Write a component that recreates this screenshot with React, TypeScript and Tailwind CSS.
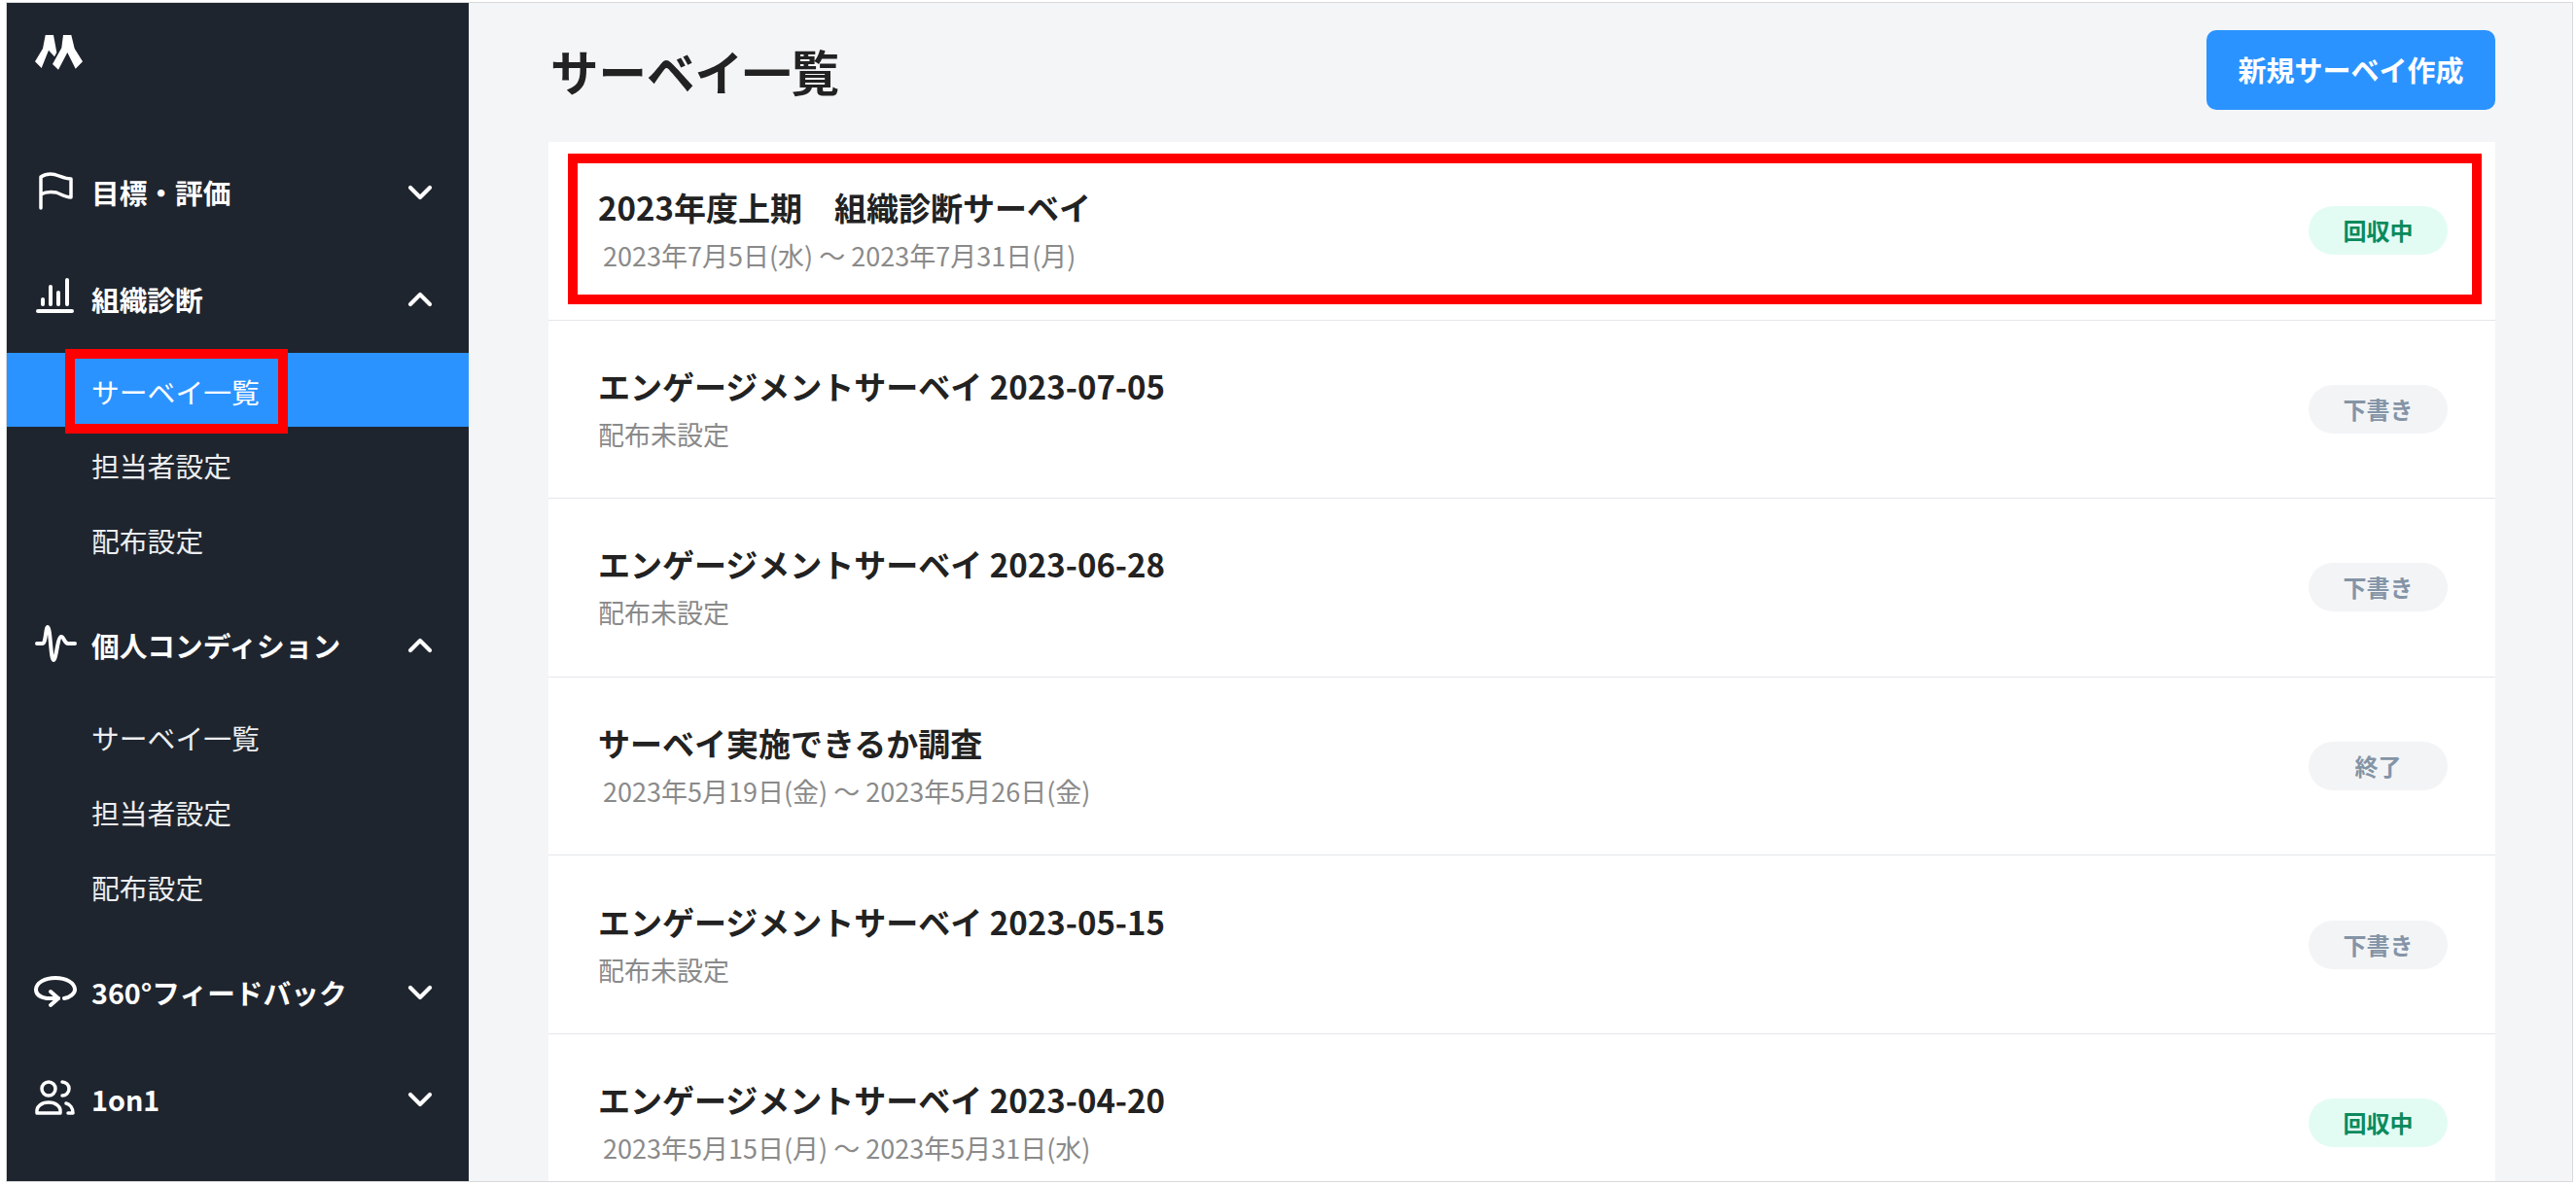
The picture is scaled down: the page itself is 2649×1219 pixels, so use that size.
import { ChevronDown, ChevronUp } from "lucide-react";
import type { ReactNode } from "react";

const iconProps = {
  className: "h-[50px] w-[60px]",
  fill: "none",
  stroke: "currentColor",
  strokeLinecap: "round",
  strokeLinejoin: "round",
} as const;

const FlagIcon = () => (
  <svg viewBox="0 3 60 50" strokeWidth="3.5" {...iconProps}>
    <path d="M12 44V12c3-2 6-3 10-3 7 0 13 5 21 5v19c-6 0-10-3-15-5-6-1-11-1-16 2" />
  </svg>
);

const BarsIcon = () => (
  <svg viewBox="0 3 60 50" strokeWidth="4" {...iconProps}>
    <path d="M9 40h35" />
    <path d="M14 33v-5M22 33V15M30 33V21M39 33V8" />
  </svg>
);

const PulseIcon = () => (
  <svg viewBox="0 -1 60 50" strokeWidth="4" {...iconProps}>
    <path d="M8 22h6c3 0 3-17 5-17 3 0 3 34 6 34 3 0 4-24 8-24 3 0 3 7 7 7h7" />
  </svg>
);

const LoopIcon = () => (
  <svg viewBox="0 0 60 50" strokeWidth="4" {...iconProps}>
    <path d="M36 31c6-1 11-5 11-9 0-7-9-12-20-12S7 15 7 22c0 5 5 8 11 9h12" />
    <path d="M22 24l8 7-8 7" />
  </svg>
);

const UsersIcon = () => (
  <svg viewBox="0 0 60 50" strokeWidth="3.5" {...iconProps}>
    <circle cx="20" cy="14" r="7" />
    <path d="M8 39c-1-7 5-11 12-11s13 4 12 11z" />
    <path d="M34 7a7 7 0 0 1 0 14M38 29c4 1 7 5 7 10h-5" />
  </svg>
);

const LogoIcon = () => (
  <svg viewBox="0 0 60 50" className="h-[50px] w-[60px]" fill="white">
    <polygon points="16.7,6 25,6 28.3,24 26,28.3 20,21.7 12.7,40 6,33.3 14,20" />
    <polygon points="35,6 43.3,6 46.7,20 55,33.3 47.7,40.7 39.3,24 30,41.7 24,36 33.3,19.3" />
  </svg>
);

type Section = {
  label: string;
  icon: ReactNode;
  open: boolean;
  items?: { label: string; active?: boolean }[];
};

const sections: Section[] = [
  { label: "目標・評価", icon: <FlagIcon />, open: false },
  {
    label: "組織診断",
    icon: <BarsIcon />,
    open: true,
    items: [{ label: "サーベイ一覧", active: true }, { label: "担当者設定" }, { label: "配布設定" }],
  },
  {
    label: "個人コンディション",
    icon: <PulseIcon />,
    open: true,
    items: [{ label: "サーベイ一覧" }, { label: "担当者設定" }, { label: "配布設定" }],
  },
  { label: "360°フィードバック", icon: <LoopIcon />, open: false },
  { label: "1on1", icon: <UsersIcon />, open: false },
];

type Status = "回収中" | "下書き" | "終了";

const surveys: { title: string; sub: string; dated?: boolean; status: Status }[] = [
  { title: "2023年度上期　組織診断サーベイ", sub: "2023年7月5日(水) 〜 2023年7月31日(月)", dated: true, status: "回収中" },
  { title: "エンゲージメントサーベイ 2023-07-05", sub: "配布未設定", status: "下書き" },
  { title: "エンゲージメントサーベイ 2023-06-28", sub: "配布未設定", status: "下書き" },
  { title: "サーベイ実施できるか調査", sub: "2023年5月19日(金) 〜 2023年5月26日(金)", dated: true, status: "終了" },
  { title: "エンゲージメントサーベイ 2023-05-15", sub: "配布未設定", status: "下書き" },
  { title: "エンゲージメントサーベイ 2023-04-20", sub: "2023年5月15日(月) 〜 2023年5月31日(水)", dated: true, status: "回収中" },
];

const Sidebar = () => (
  <aside className="relative flex w-[475px] shrink-0 flex-col bg-[#1f252e] text-white">
    <div className="h-[140px] shrink-0 pl-[23px] pt-[27px]">
      <LogoIcon />
    </div>
    {sections.map((section) => (
      <div key={section.label} className={section.items ? "mb-[16px]" : ""}>
        <div className="flex h-[110px] items-center pl-[23px] pr-[30px]">
          <span className="flex w-[64px] shrink-0 items-center">{section.icon}</span>
          <span className="flex-1 text-[28.7px] font-bold">{section.label}</span>
          {section.open ? (
            <ChevronUp size={40} strokeWidth={2.5} />
          ) : (
            <ChevronDown size={40} strokeWidth={2.5} />
          )}
        </div>
        {section.items?.map((item) => (
          <div
            key={item.label}
            className={`relative flex items-center pl-[87px] pt-[3px] text-[28.8px] ${item.active ? "h-[76px] bg-[#2b93ff] text-white" : "h-[77px] text-[#eceef0]"}`}
          >
            {item.label}
            {item.active && (
              <div className="absolute left-[60px] top-[-4px] h-[87px] w-[229px] border-[10px] border-[#ff0000]" />
            )}
          </div>
        ))}
      </div>
    ))}
  </aside>
);

const StatusPill = ({ status }: { status: Status }) => (
  <span
    className={`flex h-[50px] w-[143px] items-center justify-center rounded-full text-[24px] font-bold ${
      status === "回収中" ? "bg-[#e3fcf3] text-[#0b8a5c]" : "bg-[#f3f4f6] text-[#8494a6]"
    }`}
  >
    {status}
  </span>
);

export default function App() {
  return (
    <div className="h-[1219px] w-[2649px] overflow-hidden bg-white pb-[3px] pl-[6px] pr-[3px] pt-[2px] font-['Noto_Sans_CJK_JP',sans-serif]">
      <div className="flex h-full overflow-hidden border border-[#d8d9da] bg-[#f4f5f7]">
        <Sidebar />
        <main className="min-w-0 flex-1 pl-[82px] pr-[79px]">
          <div className="flex h-[143px] items-start justify-between">
            <h1 className="ml-[2px] mt-[35px] text-[49.5px] font-bold leading-[70px] text-[#222222]">サーベイ一覧</h1>
            <button className="mt-[28px] h-[82px] w-[297px] rounded-[10px] bg-[#2b93ff] text-[29px] font-bold text-white">
              新規サーベイ作成
            </button>
          </div>
          <ul className="bg-white">
            {surveys.map((survey, index) => (
              <li
                key={survey.title + index}
                className="relative flex h-[183.6px] items-center justify-between border-b border-[#e4e6ea] pl-[51px] pr-[49px]"
              >
                <div className="flex flex-col">
                  <span className="text-[33px] font-bold leading-[52px] text-[#222222]">{survey.title}</span>
                  <span className={`text-[27px] leading-[48px] text-[#8a8a8a] ${survey.dated ? "ml-[5px]" : ""}`}>
                    {survey.sub}
                  </span>
                </div>
                <StatusPill status={survey.status} />
                {index === 0 && (
                  <div className="absolute bottom-[16px] left-[20px] right-[14px] top-[12px] border-[10px] border-[#ff0000]" />
                )}
              </li>
            ))}
          </ul>
        </main>
      </div>
    </div>
  );
}
